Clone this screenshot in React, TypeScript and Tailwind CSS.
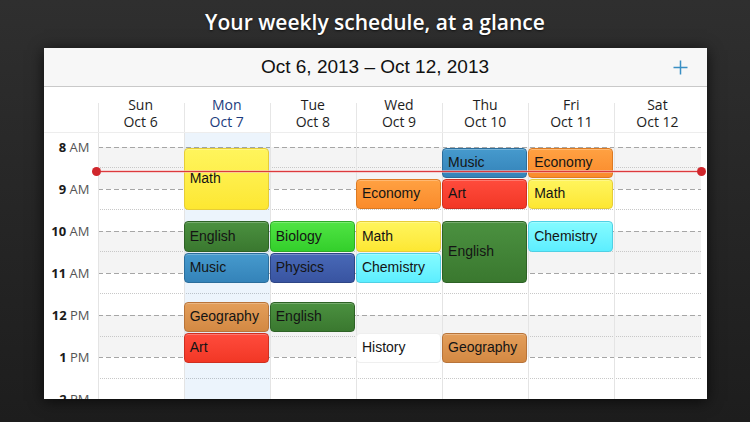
import React from 'react';

type Ev = { day: number; top: number; h: number; label: string; cls: string };

const days = [
  { name: 'Sun', date: 'Oct 6' },
  { name: 'Mon', date: 'Oct 7' },
  { name: 'Tue', date: 'Oct 8' },
  { name: 'Wed', date: 'Oct 9' },
  { name: 'Thu', date: 'Oct 10' },
  { name: 'Fri', date: 'Oct 11' },
  { name: 'Sat', date: 'Oct 12' },
];

const hours = [
  { n: '8', s: 'AM' },
  { n: '9', s: 'AM' },
  { n: '10', s: 'AM' },
  { n: '11', s: 'AM' },
  { n: '12', s: 'PM' },
  { n: '1', s: 'PM' },
  { n: '2', s: 'PM' },
];

// colour presets for each subject
const C = {
  math: 'bg-linear-to-b from-[#fff55c] to-[#fde731] border-[#e6cd38]',
  english: 'bg-linear-to-b from-[#4b9140] to-[#3a782f] border-[#2e6226]',
  biology: 'bg-linear-to-b from-[#4fe443] to-[#33cf2b] border-[#2daa26]',
  music: 'bg-linear-to-b from-[#469acd] to-[#3483b9] border-[#2b6e9c]',
  physics: 'bg-linear-to-b from-[#4869b7] to-[#3954a1] border-[#2e4686]',
  economy: 'bg-linear-to-b from-[#ffa142] to-[#fa8b2b] border-[#dd7a22]',
  art: 'bg-linear-to-b from-[#ff4b3c] to-[#f23725] border-[#cf2f21]',
  chemistry: 'bg-linear-to-b from-[#84fbff] to-[#5ceeff] border-[#4fd0e4]',
  geography: 'bg-linear-to-b from-[#e39e5a] to-[#d38943] border-[#b8743a]',
  history: 'bg-white border-[#efefef]',
};

// top / height in px, measured from the 8 AM line
const events: Ev[] = [
  { day: 1, top: 1, h: 62, label: 'Math', cls: C.math },
  { day: 1, top: 74, h: 31, label: 'English', cls: C.english },
  { day: 1, top: 106, h: 30, label: 'Music', cls: C.music },
  { day: 1, top: 155, h: 30, label: 'Geography', cls: C.geography },
  { day: 1, top: 186, h: 30, label: 'Art', cls: C.art },
  { day: 2, top: 74, h: 31, label: 'Biology', cls: C.biology },
  { day: 2, top: 106, h: 30, label: 'Physics', cls: C.physics },
  { day: 2, top: 155, h: 30, label: 'English', cls: C.english },
  { day: 3, top: 32, h: 30, label: 'Economy', cls: C.economy },
  { day: 3, top: 74, h: 31, label: 'Math', cls: C.math },
  { day: 3, top: 106, h: 30, label: 'Chemistry', cls: C.chemistry },
  { day: 3, top: 186, h: 30, label: 'History', cls: C.history },
  { day: 4, top: 1, h: 30, label: 'Music', cls: C.music },
  { day: 4, top: 32, h: 30, label: 'Art', cls: C.art },
  { day: 4, top: 74, h: 62, label: 'English', cls: C.english },
  { day: 4, top: 186, h: 30, label: 'Geography', cls: C.geography },
  { day: 5, top: 1, h: 30, label: 'Economy', cls: C.economy },
  { day: 5, top: 32, h: 30, label: 'Math', cls: C.math },
  { day: 5, top: 74, h: 31, label: 'Chemistry', cls: C.chemistry },
];

const OFFSET = 13.7;

export default function App() {
  return (
    <div className="w-[750px] h-[422px] overflow-hidden flex flex-col items-center bg-linear-to-b from-[#2f2f2f] to-[#1d1d1d]">
      <h1 className="h-[48px] flex items-center pb-[2px] text-white text-[21px] font-semibold font-['Open_Sans',sans-serif] [text-shadow:0_1px_2px_rgba(0,0,0,0.6)]">
        Your weekly schedule, at a glance
      </h1>

      <div className="w-[663px] h-[351px] bg-white flex flex-col shadow-[0_2px_14px_rgba(0,0,0,0.7)] overflow-hidden">
        {/* Title bar */}
        <div className="h-[39px] shrink-0 flex items-center justify-center relative bg-[#f7f7f7] border-b border-[#c9c9c9]">
          <span className="text-[19px] text-[#111] font-['Liberation_Sans',Arial,sans-serif]">
            Oct 6, 2013 – Oct 12, 2013
          </span>
          <svg className="absolute right-[19px] top-[12px]" width="15" height="15" viewBox="0 0 15 15">
            <path d="M7.5 0.5v14M0.5 7.5h14" stroke="#3a8fc4" strokeWidth="1.5" fill="none" />
          </svg>
        </div>

        {/* Day header */}
        <div className="h-[46px] shrink-0 flex border-b border-[#ededed] font-['Open_Sans',sans-serif] text-[14px] leading-[16.5px]">
          <div className="w-[54px] shrink-0" />
          <div className="w-[603px] grid grid-cols-7">
            {days.map((d, i) => (
              <div
                key={d.name}
                className={`relative flex flex-col items-center pt-[10px] before:absolute before:left-0 before:top-[16px] before:bottom-0 before:w-px before:bg-[#e6e6e6] ${
                  i === 1 ? 'text-[#1c3c7d]' : 'text-[#1e1e1e]'
                }`}
              >
                <span>{d.name}</span>
                <span>{d.date}</span>
              </div>
            ))}
          </div>
        </div>

        {/* Body */}
        <div className="flex-1 flex overflow-hidden">
          <div className="w-[54px] shrink-0 flex flex-col font-['Open_Sans',sans-serif] text-[13px] leading-[16px]">
            <div className="h-[13.7px] shrink-0" />
            {hours.map((h) => (
              <div key={h.n} className="h-[42.1px] shrink-0 pr-[8px] text-right">
                <div className="-translate-y-1/2">
                  <span className="font-bold text-[#1a1a1a]">{h.n}</span>{' '}
                  <span className="text-[#555]">{h.s}</span>
                </div>
              </div>
            ))}
          </div>

          <div className="w-[603px] shrink-0 relative">
            <div className="h-[13.7px]" />
            {hours.slice(0, 6).map((h, i) => (
              <div
                key={h.n}
                className={`h-[42.1px] flex flex-col ${i % 2 === 0 ? 'bg-[#f4f4f4]' : 'bg-white'}`}
              >
                <div className="h-px shrink-0 bg-[repeating-linear-gradient(90deg,#a6a6a6_0_5px,transparent_5px_8px)]" />
                <div className="h-[20.5px] shrink-0 border-b border-dotted border-[#c8c8c8]" />
              </div>
            ))}

            {/* day columns with events */}
            <div className="absolute inset-0 grid grid-cols-7">
              {days.map((d, i) => (
                <div
                  key={d.name}
                  className={`relative border-l border-[#e4e4e4] ${i === 1 ? 'bg-[#2f80e0]/[0.09]' : ''}`}
                >
                  {events
                    .filter((e) => e.day === i)
                    .map((e) => (
                      <div
                        key={e.label + e.top}
                        className={`absolute -left-px right-[1px] rounded-[4px] border flex items-center pl-[5px] text-[14px] text-[#141414] font-['Liberation_Sans',Arial,sans-serif] shadow-[inset_0_1px_0_rgba(255,255,255,0.25)] ${e.cls}`}
                        style={{ top: OFFSET + e.top, height: e.h }}
                      >
                        {e.label}
                      </div>
                    ))}
                </div>
              ))}
            </div>

            {/* current time */}
            <div className="absolute top-[33.5px] left-[-6px] right-[-5px] h-[9px] flex items-center z-20">
              <div className="w-[9px] h-[9px] rounded-full bg-[#d0262c] shrink-0" />
              <div className="flex-1 h-[3px] bg-[#f3b9b9]/60 flex items-center">
                <div className="w-full h-px bg-[#dc3a3d]" />
              </div>
              <div className="w-[9px] h-[9px] rounded-full bg-[#d0262c] shrink-0" />
            </div>
          </div>
        </div>
      </div>
    </div>
  );
}
